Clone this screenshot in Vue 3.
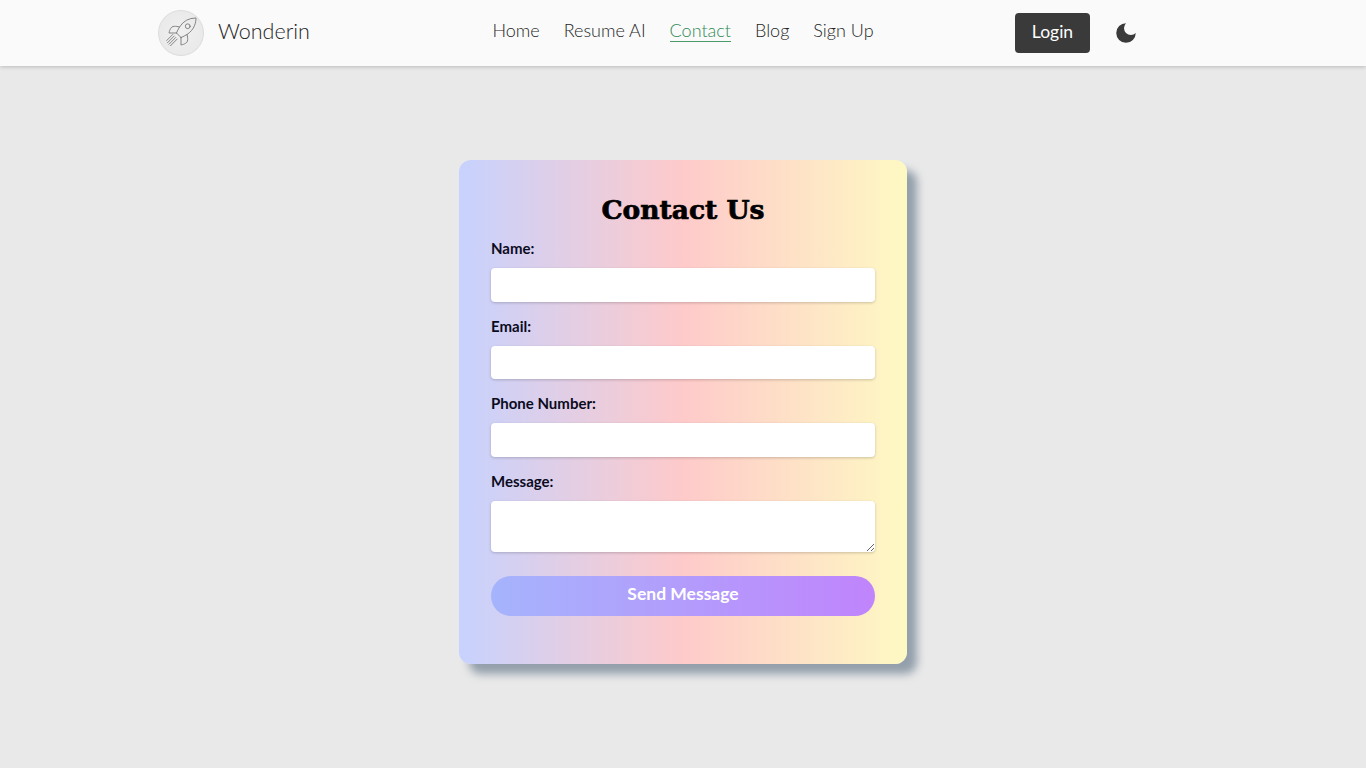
<template>
  <div class="page">
    <header class="topbar">
      <div class="brand">
        <span class="logo">
          <svg viewBox="0 0 24 24" width="36" height="36" fill="none" stroke="#6f6f6f" stroke-width="0.55" stroke-linecap="round" stroke-linejoin="round">
            <path d="m12 15-3-3a22 22 0 0 1 2-3.95A12.88 12.88 0 0 1 22 2c0 2.72-.78 7.5-6 11a22.35 22.35 0 0 1-4 2z" />
            <path d="M9 12H4s.55-3.03 2-4c1.62-1.08 5 0 5 0" />
            <path d="M12 15v5s3.03-.55 4-2c1.08-1.62 0-5 0-5" />
            <circle cx="16.5" cy="7.5" r="1.6" />
            <path d="M7.5 14 3 18.5M8.5 15 4 19.5M9.5 16 5 20.5M6.5 13 2.5 17" />
          </svg>
        </span>
        <span class="brand-name">Wonderin</span>
      </div>
      <nav class="links">
        <a v-for="link in links" :key="link" :class="{ active: link === 'Contact' }">{{ link }}</a>
      </nav>
      <div class="actions">
        <button class="login">Login</button>
        <svg class="moon" viewBox="0 0 24 24" width="26" height="26" fill="#3a3a3a">
          <path d="M12 3a6 6 0 0 0 9 9 9 9 0 1 1-9-9Z" />
        </svg>
      </div>
    </header>

    <main class="content">
      <form class="card" @submit.prevent>
        <h2>Contact Us</h2>
        <label>Name:</label>
        <input type="text" />
        <label>Email:</label>
        <input type="email" />
        <label>Phone Number:</label>
        <input type="tel" />
        <label>Message:</label>
        <textarea rows="2"></textarea>
        <button class="send" type="submit">Send Message</button>
      </form>
    </main>
  </div>
</template>

<script setup>
const links = ['Home', 'Resume AI', 'Contact', 'Blog', 'Sign Up']
</script>

<style>
html, body {
  margin: 0;
  overflow: hidden;
}
</style>

<style scoped>
.page {
  height: 768px;
  overflow: hidden;
  background: #e9e9e9;
  font-family: Lato, sans-serif;
  color: #1f1f1f;
}

.topbar {
  height: 66px;
  box-sizing: border-box;
  padding: 0 158px;
  display: grid;
  grid-template-columns: 1fr auto 1fr;
  align-items: center;
  background: #fafafa;
  box-shadow: 0 1px 4px rgba(0, 0, 0, 0.2);
}

.brand {
  display: flex;
  align-items: center;
  gap: 14px;
}

.logo {
  width: 46px;
  height: 46px;
  border-radius: 50%;
  background: radial-gradient(circle, #f0f0f0 0%, #e8e8e8 88%, #f4f4f4 100%);
  border: 1px solid #dcdcdc;
  box-sizing: border-box;
  display: flex;
  align-items: center;
  justify-content: center;
}

.brand-name {
  font-size: 21.5px;
  font-weight: 300;
  margin-top: -5px;
}

.links {
  display: flex;
  gap: 24px;
  font-size: 18px;
  font-weight: 300;
  margin-top: -4px;
}

.links a {
  line-height: 21px;
  border-bottom: 1px solid transparent;
}

.links a.active {
  color: #2f8a56;
  border-bottom-color: #4b9a6a;
}

.actions {
  display: flex;
  align-items: center;
  justify-content: flex-end;
  gap: 23px;
  padding-right: 70px;
}

.login {
  width: 75px;
  height: 40px;
  padding: 0 0 4px;
  border: none;
  border-radius: 4px;
  background: #3a3a3a;
  color: #fff;
  font: 400 17.5px Lato, sans-serif;
}

.moon {
  margin-right: -1px;
}

.content {
  display: flex;
  justify-content: center;
  padding-top: 94px;
}

.card {
  width: 448px;
  height: 504px;
  box-sizing: border-box;
  padding: 32px 32px 48px;
  display: flex;
  flex-direction: column;
  border-radius: 12px;
  background: linear-gradient(to right, #c7d2fe, #fecaca, #fef9c3);
  box-shadow: 10px 10px 8px rgba(90, 110, 130, 0.6);
}

h2 {
  margin: 0 0 8px;
  height: 36px;
  text-align: center;
  font: 900 26.5px/36px "DejaVu Serif", serif;
  -webkit-text-stroke: 0.7px #000;
  color: #000;
}

label {
  height: 24px;
  line-height: 25px;
  margin-bottom: 8px;
  font-size: 15px;
  font-weight: 700;
  color: #0b0b1e;
}

input, textarea {
  box-sizing: border-box;
  display: block;
  width: 100%;
  height: 33.6px;
  margin: 0 0 12px;
  border: none;
  border-radius: 4px;
  background: #fff;
  box-shadow: 0 1px 3px rgba(0, 0, 0, 0.2);
}

textarea {
  height: 51.2px;
  margin-bottom: 24px;
}

.send {
  height: 40px;
  padding: 0 0 4px;
  border: none;
  border-radius: 20px;
  background: linear-gradient(to right, #a5b4fc, #c084fc);
  color: #fff;
  font: 700 17.5px Lato, sans-serif;
}
</style>
